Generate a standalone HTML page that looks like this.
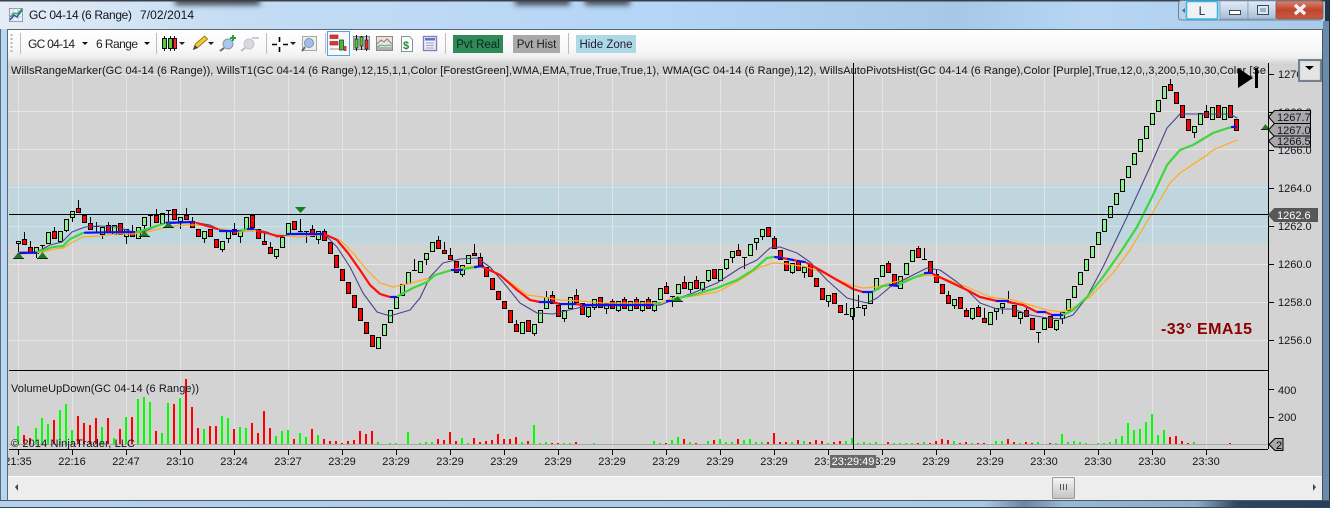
<!DOCTYPE html>
<html><head><meta charset="utf-8"><title>GC 04-14 (6 Range)</title>
<style>
html,body{margin:0;padding:0;background:#b5d3f0;width:1330px;height:508px;overflow:hidden}
svg{display:block}
text{font-family:"Liberation Sans",Arial,sans-serif;font-size:11px;fill:#14141c}
.n{fill:none}
</style></head><body>
<svg width="1330" height="508" viewBox="0 0 1330 508" xmlns="http://www.w3.org/2000/svg">
<defs>
<linearGradient id="tb" x1="0" x2="1" y1="0" y2="0"><stop offset="0" stop-color="#e4edf6"/><stop offset=".18" stop-color="#c4dcf4"/><stop offset=".5" stop-color="#b4d5f6"/><stop offset=".72" stop-color="#a6c8e6"/><stop offset=".82" stop-color="#b6d6f4"/><stop offset="1" stop-color="#a8cae8"/></linearGradient>
<linearGradient id="tool" x1="0" x2="0" y1="0" y2="1"><stop offset="0" stop-color="#ffffff"/><stop offset=".7" stop-color="#f8f8f8"/><stop offset="1" stop-color="#f0f0f0"/></linearGradient>
<linearGradient id="fade" x1="0" x2="0" y1="0" y2="1"><stop offset="0" stop-color="#f0f0f0"/><stop offset="1" stop-color="#d3d3d3"/></linearGradient>
<linearGradient id="red" x1="0" x2="0" y1="0" y2="1"><stop offset="0" stop-color="#d9826e"/><stop offset=".5" stop-color="#c0452c"/><stop offset="1" stop-color="#c85a3e"/></linearGradient>
<linearGradient id="btn" x1="0" x2="0" y1="0" y2="1"><stop offset="0" stop-color="#dfeaf5"/><stop offset=".5" stop-color="#c5d7e9"/><stop offset="1" stop-color="#a4bcd4"/></linearGradient>
<linearGradient id="thumb" x1="0" x2="0" y1="0" y2="1"><stop offset="0" stop-color="#f4f4f4"/><stop offset="1" stop-color="#c4c4c4"/></linearGradient>
<linearGradient id="bot" x1="0" x2="1" y1="0" y2="0"><stop offset="0" stop-color="#b4d2ee"/><stop offset=".74" stop-color="#a8c8e8"/><stop offset=".77" stop-color="#6c84a0"/><stop offset=".8" stop-color="#98b8d8"/><stop offset=".9" stop-color="#8cacc8"/><stop offset=".93" stop-color="#2c4660"/><stop offset="1" stop-color="#24405c"/></linearGradient>
<filter id="bl" x="-20%" y="-200%" width="140%" height="500%"><feGaussianBlur stdDeviation="3"/></filter>
</defs>
<!-- window frame -->
<rect width="1330" height="508" fill="#b5d3f0"/>
<rect x="0" y="0" width="1330" height="29" fill="url(#tb)"/>
<rect x="0" y="0" width="1330" height="1.5" fill="#3a3f48"/>
<g fill="#3a4048" filter="url(#bl)"><rect x="175" y="-2" width="85" height="7"/><rect x="515" y="-2" width="55" height="7"/><rect x="585" y="-2" width="45" height="7"/></g>
<!-- title -->
<g>
<rect x="9.5" y="8.5" width="13" height="13" fill="#f2f4f8" stroke="#8c98aa"/>
<path d="M9 13h14M9 17h14M13 8v14M18 8v14" stroke="#c3cad6" stroke-width="1"/>
<path class="n" d="M10 20l4-5 3 2 5-7" stroke="#2458c8" stroke-width="1.5"/>
<path class="n" d="M10 17l4-4 3 1 5-5" stroke="#3cae3c" stroke-width="1.3"/>
</g>
<text x="29" y="19" textLength="103" lengthAdjust="spacing" style="font-size:12px" fill="#000">GC 04-14 (6 Range)</text>
<text x="140" y="19" textLength="54" lengthAdjust="spacing" style="font-size:12px" fill="#000">7/02/2014</text>
<!-- window controls -->
<rect x="1178.5" y="0.500" width="144" height="19.500" rx="3" fill="#b9d2ea" stroke="#6c8098"/>
<path d="M1185 8l-3 2.500 3 2.500z" fill="#5a6a7a"/>
<rect x="1186.500" y="1.500" width="31" height="17.500" rx="2" fill="#eef2f6" stroke="#30bce8" stroke-width="1.500"/>
<text x="1202" y="15" text-anchor="middle" style="font-size:12px;fill:#14284a">L</text>
<rect x="1220" y="1" width="28" height="18" fill="url(#btn)" stroke="#7a8ea4" stroke-width=".6"/>
<rect x="1248" y="1" width="28" height="18" fill="url(#btn)" stroke="#7a8ea4" stroke-width=".6"/>
<rect x="1276" y="1" width="47" height="18" rx="2" fill="url(#red)" stroke="#7a4a44" stroke-width=".6"/>
<rect x="1229.500" y="10.500" width="11" height="4" fill="#fff" stroke="#3c4a5c"/>
<rect x="1257.500" y="5.500" width="11" height="9" fill="#dde6ee" stroke="#3c4a5c"/><rect x="1260" y="8" width="6" height="4" fill="#9fb4c8"/>
<path d="M1295 5l10 9M1305 5l-10 9" stroke="#fff" stroke-width="3.200"/>
<path d="M1295 5l10 9M1305 5l-10 9" stroke="#e8eef4" stroke-width="2"/>
<rect x="1325" y="0" width="5" height="22" fill="#24344a"/>
<!-- client area -->
<rect x="7.500" y="29.500" width="1315" height="471" fill="#eee" stroke="#5a6672"/>
<rect x="8" y="30" width="1314" height="27" fill="url(#tool)"/>
<rect x="8" y="57" width="1314" height="7" fill="url(#fade)"/>
<rect x="8" y="64" width="1314" height="412" fill="#d3d3d3"/>
<!-- toolbar -->
<path d="M11.500 34v20" stroke="#b8b8b8" stroke-width="2" stroke-dasharray="2 2"/>
<path d="M20.500 33v21M156.500 33v21M266.500 33v21M325.500 33v21M445.500 33v21M568.500 33v21" stroke="#bdbdbd"/>
<text x="28" y="48" textLength="47" lengthAdjust="spacing" style="font-size:12px;fill:#222">GC 04-14</text><path d="M82 42h6l-3 3z" fill="#111"/>
<text x="96" y="48" textLength="42" lengthAdjust="spacing" style="font-size:12px;fill:#222">6 Range</text><path d="M144 42h6l-3 3z" fill="#111"/>
<!-- candle tool -->
<g stroke="#111"><path d="M164.500 36v15M170.500 36v15M174.500 36v15"/><rect x="162.500" y="38.500" width="4" height="10" fill="#50cc3c"/><rect x="168.500" y="38.500" width="4" height="10" fill="#50cc3c"/><rect x="173.500" y="38.500" width="3" height="10" fill="#e8303c" stroke="#500"/></g>
<path d="M179 42h6l-3 3zM208 42h6l-3 3zM290 42h6l-3 3z" fill="#222"/>
<!-- pencil -->
<path d="M193.500 49l2-5 9-8 3 3-9 8z" fill="#f4c83a" stroke="#9a7a1a"/><path d="M193 50l2-5 3 3z" fill="#444"/>
<!-- zoom + -->
<circle cx="228" cy="44" r="5" fill="#a8c8ee" stroke="#8a97a8"/><path d="M224 48l-4 3" stroke="#666" stroke-width="2"/><path d="M233 35v6M230 38h6" stroke="#20a040" stroke-width="2"/>
<circle cx="249" cy="44" r="5" fill="#d6dade" stroke="#c2c6ca"/><path d="M245 48l-4 3" stroke="#bbb" stroke-width="2"/><path d="M252 38h7" stroke="#ccc" stroke-width="2"/>
<!-- crosshair -->
<path d="M272 44.500h5M283 44.500h5M279.500 37v5M279.500 47v5" stroke="#000" stroke-width="1.600"/>
<rect x="302.500" y="36.500" width="14" height="14" fill="#eceef0" stroke="#a4a8ae"/><circle cx="309" cy="43" r="4.500" fill="#9cc0ea" stroke="#8090a4"/><path d="M305 47l-3 4" stroke="#666" stroke-width="2"/>
<!-- highlighted button -->
<rect x="327.500" y="31.500" width="22" height="24" fill="#f6f8fa" stroke="#58a0e0"/>
<rect x="330" y="35" width="8" height="3.500" fill="#e83030" stroke="#822" stroke-width=".6"/><rect x="330" y="41.500" width="8" height="3.500" fill="#e83030" stroke="#822" stroke-width=".6"/>
<rect x="339.500" y="40" width="4" height="10" fill="#40c030" stroke="#222" stroke-width=".7"/><rect x="344" y="46" width="2.500" height="5" fill="#d04040"/>
<path d="M330 49h9" stroke="#999"/>
<!-- candles icon -->
<rect x="353.500" y="36.500" width="16" height="13" fill="#c8cccf" stroke="#8a8a8a"/><path d="M356.500 35v16M361.500 36v14M366.500 35v16" stroke="#111"/><rect x="355" y="39" width="3" height="9" fill="#50cc3c" stroke="#111" stroke-width=".6"/><rect x="360" y="37" width="3" height="9" fill="#50cc3c" stroke="#111" stroke-width=".6"/><rect x="365" y="40" width="3" height="9" fill="#e03030" stroke="#111" stroke-width=".6"/>
<!-- chart icon -->
<rect x="376.500" y="36.500" width="16" height="14" fill="#dfe6e4" stroke="#8a8a8a"/><path class="n" d="M377 44l4-4 3 2 3-3 5 5" stroke="#d06060"/><path class="n" d="M377 47l4-2 4 1 4-1 3 1" stroke="#50b070"/><rect x="377" y="47" width="15" height="3" fill="#b0b0b0"/>
<!-- $ icon -->
<path d="M401.500 36.500h8l3 3v12h-11z" fill="#fff" stroke="#8e8e8e"/><text x="403" y="49" style="font-size:11px;font-weight:bold;fill:#1a8a2e">$</text>
<!-- form icon -->
<rect x="423.500" y="36.500" width="13" height="14" fill="#f0f2fa" stroke="#8a7cb4" stroke-width="1.400"/><rect x="425" y="38" width="10" height="2.500" fill="#5a78c8"/><path d="M426 43h8M426 45.500h8M426 48h8" stroke="#98a0c0"/>
<!-- buttons -->
<rect x="453" y="35" width="50" height="18" fill="#2e8b57"/><text x="478" y="48" text-anchor="middle" style="font-size:11.500px;fill:#122">Pvt Real</text>
<rect x="513" y="35" width="47" height="18" fill="#a9a9a9"/><text x="536.500" y="48" text-anchor="middle" style="font-size:11.500px;fill:#222">Pvt Hist</text>
<rect x="576" y="35" width="60" height="18" fill="#add8e6"/><text x="606" y="48" text-anchor="middle" style="font-size:11.500px;fill:#223">Hide Zone</text>
<!-- zone -->
<rect x="9" y="185" width="1259" height="58" fill="#bfd6de"/>
<path d="M9 185.500h1259M9 242.500h1259" stroke="#b2dcea"/>
<!-- grid -->
<path d="M18.500 73V449M72.500 73V449M126.500 73V449M180.500 73V449M234.500 73V449M288.500 73V449M342.500 73V449M396.500 73V449M450.500 73V449M504.500 73V449M558.500 73V449M612.500 73V449M666.500 73V449M720.500 73V449M774.500 73V449M828.500 73V449M882.500 73V449M936.500 73V449M990.500 73V449M1044.500 73V449M1098.500 73V449M1152.500 73V449M1206.500 73V449" stroke="#e6e6e6" opacity=".85"/>
<path d="M9 74.500H1268M9 111.500H1268M9 149.500H1268M9 264.500H1268M9 302.500H1268M9 340.500H1268" stroke="#e6e6e6"/>
<path d="M9 187.500H1268M9 226.500H1268" stroke="#d2e2e8"/>
<!-- volume -->
<path d="M9 444.500H1268" stroke="#a9a9a9"/>
<path fill="none" stroke="#00ff00" stroke-width="2" d="M18 444V426M36 444V428M42 444V418M48 444V424M60 444V410M66 444V404M72 444V430M102 444V427M114 444V438M126 444V417M138 444V399M144 444V397M150 444V402M162 444V433M168 444V403M180 444V398M204 444V429M222 444V416M228 444V418M240 444V427M246 444V428M276 444V436M282 444V431M288 444V430M300 444V433M306 444V437M318 444V435M378 444V442M390 444V443M396 444V443M408 444V432M420 444V443M426 444V442M432 444V442M462 444V438M468 444V443M522 444V442M534 444V425M540 444V443M546 444V442M564 444V443M570 444V443M594 444V443M654 444V441M660 444V443M672 444V440M678 444V437M690 444V442M708 444V441M720 444V439M726 444V442M732 444V442M744 444V440M750 444V439M756 444V442M762 444V442M792 444V442M804 444V441M828 444V443M846 444V441M852 444V438M858 444V443M864 444V442M870 444V443M876 444V442M894 444V443M900 444V443M906 444V443M912 444V443M924 444V442M954 444V441M972 444V443M996 444V441M1002 444V441M1020 444V443M1038 444V442M1056 444V443M1062 444V434M1068 444V442M1074 444V441M1080 444V442M1086 444V443M1098 444V443M1104 444V443M1110 444V442M1116 444V439M1122 444V436M1128 444V423M1134 444V430M1140 444V429M1146 444V422M1152 444V414M1158 444V435M1164 444V430M1194 444V442"/>
<path fill="none" stroke="#ff0000" stroke-width="2" d="M24 444V435M30 444V438M54 444V420M78 444V416M84 444V423M90 444V425M96 444V418M108 444V418M120 444V429M132 444V417M156 444V431M174 444V404M186 444V379M192 444V407M198 444V428M210 444V426M216 444V426M234 444V429M252 444V423M258 444V433M264 444V411M270 444V428M294 444V439M312 444V429M324 444V439M330 444V441M336 444V441M342 444V443M348 444V441M354 444V440M360 444V431M366 444V434M372 444V431M438 444V439M444 444V440M450 444V432M456 444V441M474 444V438M480 444V442M486 444V441M492 444V440M498 444V434M504 444V439M510 444V439M516 444V437M528 444V441M552 444V443M558 444V443M576 444V442M666 444V443M684 444V439M696 444V443M714 444V440M738 444V439M768 444V442M774 444V433M780 444V442M786 444V442M798 444V440M810 444V442M816 444V440M822 444V441M834 444V442M840 444V441M888 444V442M918 444V443M930 444V443M936 444V441M942 444V439M948 444V440M960 444V443M966 444V442M978 444V443M984 444V443M1008 444V439M1014 444V442M1026 444V442M1032 444V443M1050 444V443M1170 444V437M1176 444V436M1182 444V441M1188 444V443M1230 444V443"/>
<!-- wicks -->
<path fill="none" stroke="#000" d="M18.500 243V252M24.500 232V239M30.500 241V247M36.500 253V258M42.500 245V258M54.500 227V231M60.500 241V243M66.500 230V232M72.500 217V222M78.500 200V208M90.500 217V223M96.500 222V232M102.500 234V239M108.500 222V225M126.500 236V244M132.500 225V231M144.500 225V232M150.500 215V229M156.500 209V215M168.500 210V223M180.500 221V229M186.500 208V215M192.500 217V221M204.500 238V243M222.500 249V252M228.500 238V243M234.500 223V229M240.500 236V243M264.500 233V241M270.500 242V247M276.500 256V259M300.500 219V231M306.500 231V243M312.500 225V229M318.500 239V244M324.500 229V231M414.500 259V270M426.500 259V265M438.500 236V240M444.500 242V250M450.500 248V255M462.500 274V277M474.500 244V253M480.500 253V257M516.500 320V324M534.500 333V336M546.500 291V297M552.500 291V295M564.500 318V322M576.500 289V295M588.500 316V318M594.500 307V310M606.500 308V314M612.500 299V301M618.500 310V312M624.500 297V299M636.500 297V299M642.500 310V312M648.500 297V299M654.500 310V312M666.500 282V286M672.500 296V307M684.500 276V282M690.500 289V293M696.500 276V280M702.500 289V292M708.500 280V282M726.500 268V270M732.500 257V263M738.500 244V250M744.500 257V269M756.500 242V250M762.500 236V240M774.500 236V238M792.500 272V274M804.500 272V278M828.500 301V307M846.500 303V314M852.500 316V320M858.500 295V307M864.500 308V316M888.500 261V263M918.500 246V248M924.500 248V259M936.500 270V274M948.500 291V295M954.500 305V309M966.500 308V310M972.500 318V320M978.500 305V307M984.500 308V318M996.500 311V320M1002.500 307V314M1008.500 291V301M1020.500 318V324M1026.500 306V310M1038.500 332V343M1056.500 329V331M1062.500 318V324M1170.500 79V84M1194.500 132V138M1206.500 105V111"/>
<path fill="none" stroke="#000" d="M40 245.500h5M94 226.500h5M148 215.500h5M166 210.500h5M298 231.500h5M304 231.500h5M412 270.500h5M670 296.500h5M742 257.500h5M844 314.500h5M856 307.500h5M922 259.500h5M1006 301.500h5M1036 332.500h5"/>
<!-- green bodies -->
<path fill="#90ee90" stroke="#000" d="M16.500 241.500h4v2h-4zM34.500 247.500h4v6h-4zM46.500 232.500h4v11h-4zM58.500 231.500h4v10h-4zM64.500 219.500h4v11h-4zM70.500 211.500h4v6h-4zM100.500 227.500h4v7h-4zM112.500 225.500h4v9h-4zM124.500 229.500h4v7h-4zM136.500 227.500h4v11h-4zM142.500 217.500h4v8h-4zM160.500 213.500h4v10h-4zM178.500 217.500h4v4h-4zM202.500 231.500h4v7h-4zM220.500 241.500h4v8h-4zM226.500 231.500h4v7h-4zM238.500 231.500h4v5h-4zM244.500 217.500h4v12h-4zM274.500 249.500h4v7h-4zM280.500 237.500h4v10h-4zM286.500 223.500h4v11h-4zM316.500 231.500h4v8h-4zM376.500 337.500h4v11h-4zM382.500 324.500h4v11h-4zM388.500 310.500h4v12h-4zM394.500 297.500h4v11h-4zM400.500 284.500h4v11h-4zM406.500 272.500h4v11h-4zM418.500 261.500h4v11h-4zM424.500 253.500h4v6h-4zM430.500 242.500h4v9h-4zM460.500 265.500h4v9h-4zM466.500 255.500h4v8h-4zM520.500 322.500h4v11h-4zM532.500 324.500h4v9h-4zM538.500 310.500h4v12h-4zM544.500 297.500h4v11h-4zM562.500 310.500h4v8h-4zM568.500 297.500h4v11h-4zM586.500 307.500h4v9h-4zM592.500 299.500h4v8h-4zM604.500 303.500h4v5h-4zM616.500 301.500h4v9h-4zM628.500 301.500h4v9h-4zM640.500 301.500h4v9h-4zM652.500 301.500h4v9h-4zM658.500 288.500h4v11h-4zM676.500 284.500h4v9h-4zM688.500 282.500h4v7h-4zM700.500 282.500h4v7h-4zM706.500 270.500h4v10h-4zM718.500 269.500h4v11h-4zM724.500 259.500h4v9h-4zM730.500 251.500h4v6h-4zM748.500 244.500h4v11h-4zM754.500 238.500h4v4h-4zM760.500 229.500h4v7h-4zM790.500 263.500h4v9h-4zM802.500 267.500h4v5h-4zM826.500 295.500h4v6h-4zM850.500 308.500h4v8h-4zM862.500 305.500h4v3h-4zM868.500 291.500h4v12h-4zM874.500 278.500h4v11h-4zM880.500 265.500h4v11h-4zM898.500 276.500h4v12h-4zM904.500 263.500h4v11h-4zM910.500 250.500h4v11h-4zM952.500 299.500h4v6h-4zM970.500 308.500h4v10h-4zM988.500 312.500h4v12h-4zM994.500 308.500h4v3h-4zM1000.500 303.500h4v4h-4zM1018.500 312.500h4v6h-4zM1042.500 318.500h4v11h-4zM1054.500 320.500h4v9h-4zM1060.500 312.500h4v6h-4zM1066.500 299.500h4v11h-4zM1072.500 286.500h4v11h-4zM1078.500 272.500h4v12h-4zM1084.500 259.500h4v11h-4zM1090.500 246.500h4v11h-4zM1096.500 232.500h4v12h-4zM1102.500 219.500h4v12h-4zM1108.500 206.500h4v11h-4zM1114.500 193.500h4v11h-4zM1120.500 179.500h4v12h-4zM1126.500 166.500h4v11h-4zM1132.500 153.500h4v11h-4zM1138.500 139.500h4v12h-4zM1144.500 126.500h4v12h-4zM1150.500 113.500h4v11h-4zM1156.500 100.500h4v11h-4zM1162.500 86.500h4v12h-4zM1192.500 126.500h4v6h-4zM1198.500 113.500h4v11h-4zM1210.500 107.500h4v12h-4zM1222.500 107.500h4v12h-4z"/>
<!-- red bodies -->
<path fill="#ff0000" stroke="#000" d="M22.500 239.500h4v5h-4zM28.500 247.500h4v5h-4zM52.500 231.500h4v7h-4zM76.500 208.500h4v4h-4zM82.500 215.500h4v7h-4zM88.500 223.500h4v6h-4zM106.500 225.500h4v7h-4zM118.500 223.500h4v11h-4zM130.500 231.500h4v5h-4zM154.500 215.500h4v7h-4zM172.500 209.500h4v10h-4zM184.500 215.500h4v4h-4zM190.500 221.500h4v6h-4zM196.500 229.500h4v7h-4zM208.500 229.500h4v7h-4zM214.500 239.500h4v8h-4zM232.500 229.500h4v5h-4zM250.500 215.500h4v12h-4zM256.500 229.500h4v9h-4zM262.500 241.500h4v3h-4zM268.500 247.500h4v6h-4zM292.500 221.500h4v8h-4zM310.500 229.500h4v7h-4zM322.500 231.500h4v9h-4zM328.500 242.500h4v11h-4zM334.500 255.500h4v12h-4zM340.500 269.500h4v11h-4zM346.500 282.500h4v11h-4zM352.500 295.500h4v12h-4zM358.500 308.500h4v12h-4zM364.500 322.500h4v11h-4zM370.500 335.500h4v11h-4zM436.500 240.500h4v8h-4zM442.500 250.500h4v3h-4zM448.500 255.500h4v4h-4zM454.500 261.500h4v11h-4zM472.500 253.500h4v2h-4zM478.500 257.500h4v8h-4zM484.500 267.500h4v9h-4zM490.500 278.500h4v11h-4zM496.500 291.500h4v8h-4zM502.500 301.500h4v7h-4zM508.500 310.500h4v12h-4zM514.500 324.500h4v7h-4zM526.500 320.500h4v11h-4zM550.500 295.500h4v8h-4zM556.500 305.500h4v11h-4zM574.500 295.500h4v7h-4zM580.500 303.500h4v11h-4zM598.500 297.500h4v10h-4zM610.500 301.500h4v7h-4zM622.500 299.500h4v9h-4zM634.500 299.500h4v9h-4zM646.500 299.500h4v9h-4zM664.500 286.500h4v7h-4zM682.500 282.500h4v6h-4zM694.500 280.500h4v8h-4zM712.500 269.500h4v9h-4zM736.500 250.500h4v5h-4zM766.500 227.500h4v9h-4zM772.500 238.500h4v10h-4zM778.500 250.500h4v9h-4zM784.500 261.500h4v9h-4zM796.500 261.500h4v9h-4zM808.500 265.500h4v11h-4zM814.500 278.500h4v8h-4zM820.500 288.500h4v11h-4zM832.500 293.500h4v10h-4zM838.500 305.500h4v7h-4zM886.500 263.500h4v9h-4zM892.500 274.500h4v10h-4zM916.500 248.500h4v9h-4zM928.500 261.500h4v11h-4zM934.500 274.500h4v8h-4zM940.500 284.500h4v9h-4zM946.500 295.500h4v8h-4zM958.500 297.500h4v11h-4zM964.500 310.500h4v6h-4zM976.500 307.500h4v9h-4zM982.500 318.500h4v4h-4zM1012.500 305.500h4v11h-4zM1024.500 310.500h4v6h-4zM1030.500 318.500h4v11h-4zM1048.500 316.500h4v11h-4zM1168.500 84.500h4v6h-4zM1174.500 92.500h4v11h-4zM1180.500 105.500h4v12h-4zM1186.500 119.500h4v11h-4zM1204.500 111.500h4v6h-4zM1216.500 105.500h4v12h-4zM1228.500 105.500h4v12h-4zM1234.500 119.500h4v11h-4z"/>
<!-- moving averages -->
<g fill="none" stroke-linejoin="round" stroke-linecap="round">
<polyline stroke="#ffa91e" stroke-width="1.200" points="20,254 37,253 55,249 63,248 73,242 83,237 100,236 117,234 133,234 147,232 167,227 187,225 200,225 217,228 237,232 257,231 277,235 300,237 324,234 340,240 353,253 367,270 380,283 393,287 407,284 430,278 443,272 460,268 477,266 490,270 510,282 527,295 543,297 560,300 580,301 603,303 660,303 673,298 693,296 717,292 740,280 760,267 773,263 787,264 807,267 823,273 850,285 863,288 877,287 890,283 913,278 927,275 940,277 967,287 990,297 997,298 1013,300 1030,305 1047,310 1062,312 1073,308 1090,297 1113,273 1130,250 1150,217 1170,183 1180,173 1207,155 1213,150 1237,140"/>
<polyline stroke="#46468c" stroke-width="1.100" points="20,252 37,252 50,245 62,242 72,232 85,227 100,226 117,227 133,232 143,232 167,222 193,222 210,225 220,230 233,231 253,229 267,232 277,237 287,235 300,233 324,234 337,247 350,267 363,293 377,312 390,316 410,310 420,298 430,277 443,263 460,259 477,258 490,267 503,282 520,303 537,313 553,314 573,309 587,306 660,305 673,300 693,293 717,283 740,268 757,260 770,248 780,247 797,253 810,262 827,280 847,298 867,303 877,298 890,287 907,278 927,268 940,270 957,282 970,293 980,303 997,309 1013,309 1030,315 1047,318 1062,319 1073,315 1087,297 1103,267 1127,217 1150,167 1167,128 1180,114 1203,114 1230,114 1237,118"/>
<path stroke="#3ed63e" stroke-width="2.200" d="M37 252L53 247 63 246 70 239 83 233M137 232L147 229 163 224M242 231L247 229M398 296L413 288 427 282 435 275 452 270M463 269L477 267M655 304L660 303M673 299L693 295 717 288 737 280 753 270 767 258 773 257M872 292L883 286 890 285M898 285L913 278 927 273M1063 315L1073 310 1087 297 1103 277 1120 253 1137 227 1153 195 1167 165 1180 150 1193 145 1213 133 1228 128 1232 127"/>
<path stroke="#ff1010" stroke-width="2.200" d="M197 223L207 226 217 229M257 231L267 233 277 236 283 236M324 234L337 240 348 253 360 270 370 285 380 294 390 297M483 267L500 275 517 290 530 300 540 302M552 302L560 304M575 304L583 305M782 258L788 259M793 260L798 261M807 263L820 270 837 280 853 289 863 292M933 274L950 282 967 290 980 297 997 301M1008 302L1023 305 1037 312M1045 312L1052 315"/>
<path stroke="#1010f0" stroke-width="2.200" d="M20 253L36 252.700M85 232.700L133 232M167 223L192 222M220 231L237 231M248 229L253 229M288 234L323 234M391 297L396 297M452 270L462 270M475 267L483 266M540 302L552 302M560 304L575 304M583 305L653 305M667 301L672 301M775 257L782 258M788 259L793 260M798 261L805 262M863 292L872 292M890 285L898 286M925 273L932 273M997 301L1008 301M1038 312L1045 312M1052 315L1062 315M1232 127L1236 127"/>
</g>
<!-- triangles -->
<g fill="#1e7a1e">
<path d="M13 259l5.500-7 5.500 7z"/><path d="M37 259l5.500-7 5.500 7z"/><path d="M139 237l5.500-6 5.500 6z"/><path d="M163 228l5.500-6 5.500 6z"/><path d="M672 302l5.500-6 5.500 6z"/>
<path d="M295 207h11l-5.500 6z"/><path d="M1261 130l4.500-6 4.500 6z"/>
</g>
<path d="M13 258.500h11M37 258.500h11M139 236.500h11M163 227.500h11M672 301.500h11M1261 129.500h8" stroke="#0c2c0c"/>
<!-- crosshairs / axes -->
<path d="M9 214.500H1268M853.500 63V449" stroke="#000"/>
<path d="M9 370.500H1268M9 449.500H1268M1268.500 63V449" stroke="#000"/>
<path d="M18.500 449v6M72.500 449v6M126.500 449v6M180.500 449v6M234.500 449v6M288.500 449v6M342.500 449v6M396.500 449v6M450.500 449v6M504.500 449v6M558.500 449v6M612.500 449v6M666.500 449v6M720.500 449v6M774.500 449v6M828.500 449v6M882.500 449v6M936.500 449v6M990.500 449v6M1044.500 449v6M1098.500 449v6M1152.500 449v6M1206.500 449v6" stroke="#000"/>
<path d="M1268 74.500h6M1268 112.500h6M1268 150.500h6M1268 188.500h6M1268 226.500h6M1268 264.500h6M1268 302.500h6M1268 340.500h6M1268 389.500h6M1268 417.500h6" stroke="#000"/>
<!-- axis text -->
<text x="1278" y="78">1270.0</text><text x="1278" y="116">1268.0</text><text x="1278" y="154">1266.0</text><text x="1278" y="192">1264.0</text><text x="1278" y="230">1262.0</text><text x="1278" y="268">1260.0</text><text x="1278" y="306">1258.0</text><text x="1278" y="344">1256.0</text>
<text x="1278" y="394">400</text><text x="1278" y="421">200</text>
<!-- time labels -->
<g text-anchor="middle">
<text x="18" y="465">21:35</text><text x="72" y="465">22:16</text><text x="126" y="465">22:47</text><text x="180" y="465">23:10</text><text x="234" y="465">23:24</text><text x="288" y="465">23:27</text><text x="342" y="465">23:29</text><text x="396" y="465">23:29</text><text x="450" y="465">23:29</text><text x="504" y="465">23:29</text><text x="558" y="465">23:29</text><text x="612" y="465">23:29</text><text x="666" y="465">23:29</text><text x="720" y="465">23:29</text><text x="774" y="465">23:29</text><text x="828" y="465">23:29</text><text x="882" y="465">23:29</text><text x="936" y="465">23:29</text><text x="990" y="465">23:29</text><text x="1044" y="465">23:30</text><text x="1098" y="465">23:30</text><text x="1152" y="465">23:30</text><text x="1206" y="465">23:30</text>
</g>
<rect x="830" y="455" width="46" height="13" fill="#696969"/><text x="853" y="465" text-anchor="middle" style="fill:#fff">23:29:49</text>
<!-- legend -->
<text x="11" y="74" textLength="1255" lengthAdjust="spacing">WillsRangeMarker(GC 04-14 (6 Range)), WillsT1(GC 04-14 (6 Range),12,15,1,1,Color [ForestGreen],WMA,EMA,True,True,True,1), WMA(GC 04-14 (6 Range),12), WillsAutoPivotsHist(GC 04-14 (6 Range),Color [Purple],True,12,0,,3,200,5,10,30,Color [Se</text>
<text x="11" y="392" textLength="188" lengthAdjust="spacing">VolumeUpDown(GC 04-14 (6 Range))</text>
<text x="11" y="447" textLength="124" lengthAdjust="spacing">© 2014 NinjaTrader, LLC</text>
<text x="1161" y="334" textLength="91" lengthAdjust="spacing" style="font-size:16px;font-weight:bold;fill:#8b0000">-33° EMA15</text>
<!-- play icon -->
<path d="M1238 68l15 10-15 10z" fill="#000"/><rect x="1255" y="68" width="3" height="20" fill="#000"/>
<!-- dropdown -->
<rect x="1299" y="60" width="22" height="21" fill="#d8d8d8" stroke="#76828e" stroke-width="2"/><rect x="1301" y="62" width="18" height="17" fill="#e4e4e4"/><path d="M1305 66h9l-4.500 4z" fill="#000"/>
<!-- price markers -->
<g fill="#a9a9a9" stroke="#000">
<path d="M1268.500 117l6-6.500h36v13h-36z"/><path d="M1268.500 130l6-6.500h36v13h-36z"/><path d="M1268.500 141l6-5h36v11h-36z"/>
<path d="M1269 444.500l6-6h8v12h-8z"/>
</g>
<path d="M1268.500 215l6-6.500h43v13h-43z" fill="#585858" stroke="#555"/>
<text x="1277" y="121" style="fill:#181028">1267.7</text><text x="1277" y="134" style="fill:#181028">1267.0</text><text x="1277" y="145" style="fill:#181028">1266.5</text>
<text x="1277" y="219" style="fill:#fff">1262.6</text><text x="1276" y="449" style="fill:#000">2</text>
<!-- scrollbar -->
<rect x="8" y="476" width="1314" height="1" fill="#fafafa"/>
<rect x="8" y="477" width="1314" height="23" fill="#ededed"/>
<path d="M15 487l3-3v7z" fill="#444"/><path d="M1316 487l-3-3v7z" fill="#444"/>
<rect x="1052.500" y="477.500" width="22" height="21" rx="1" fill="url(#thumb)" stroke="#9a9a9a"/>
<path d="M1060.500 484v6M1063.500 484v6M1066.500 484v6" stroke="#555"/>
<!-- frame overlays -->
<rect x="0" y="29" width="7" height="479" fill="#b8d6f2"/>
<rect x="0" y="29" width="1" height="479" fill="#5a6a7c"/>
<rect x="7" y="29" width="1" height="472" fill="#5a6672"/>
<rect x="1323" y="21" width="7" height="487" fill="#6a8cac"/>
<rect x="1322" y="29" width="1" height="472" fill="#45525f"/>
<rect x="1329" y="0" width="1" height="508" fill="#1e2a38"/>
<rect x="0" y="500" width="1330" height="1" fill="#4c5864"/>
<rect x="0" y="501" width="1330" height="6" fill="url(#bot)"/>
<rect x="0" y="507" width="1330" height="1" fill="#3a4652"/>
</svg>
</body></html>
